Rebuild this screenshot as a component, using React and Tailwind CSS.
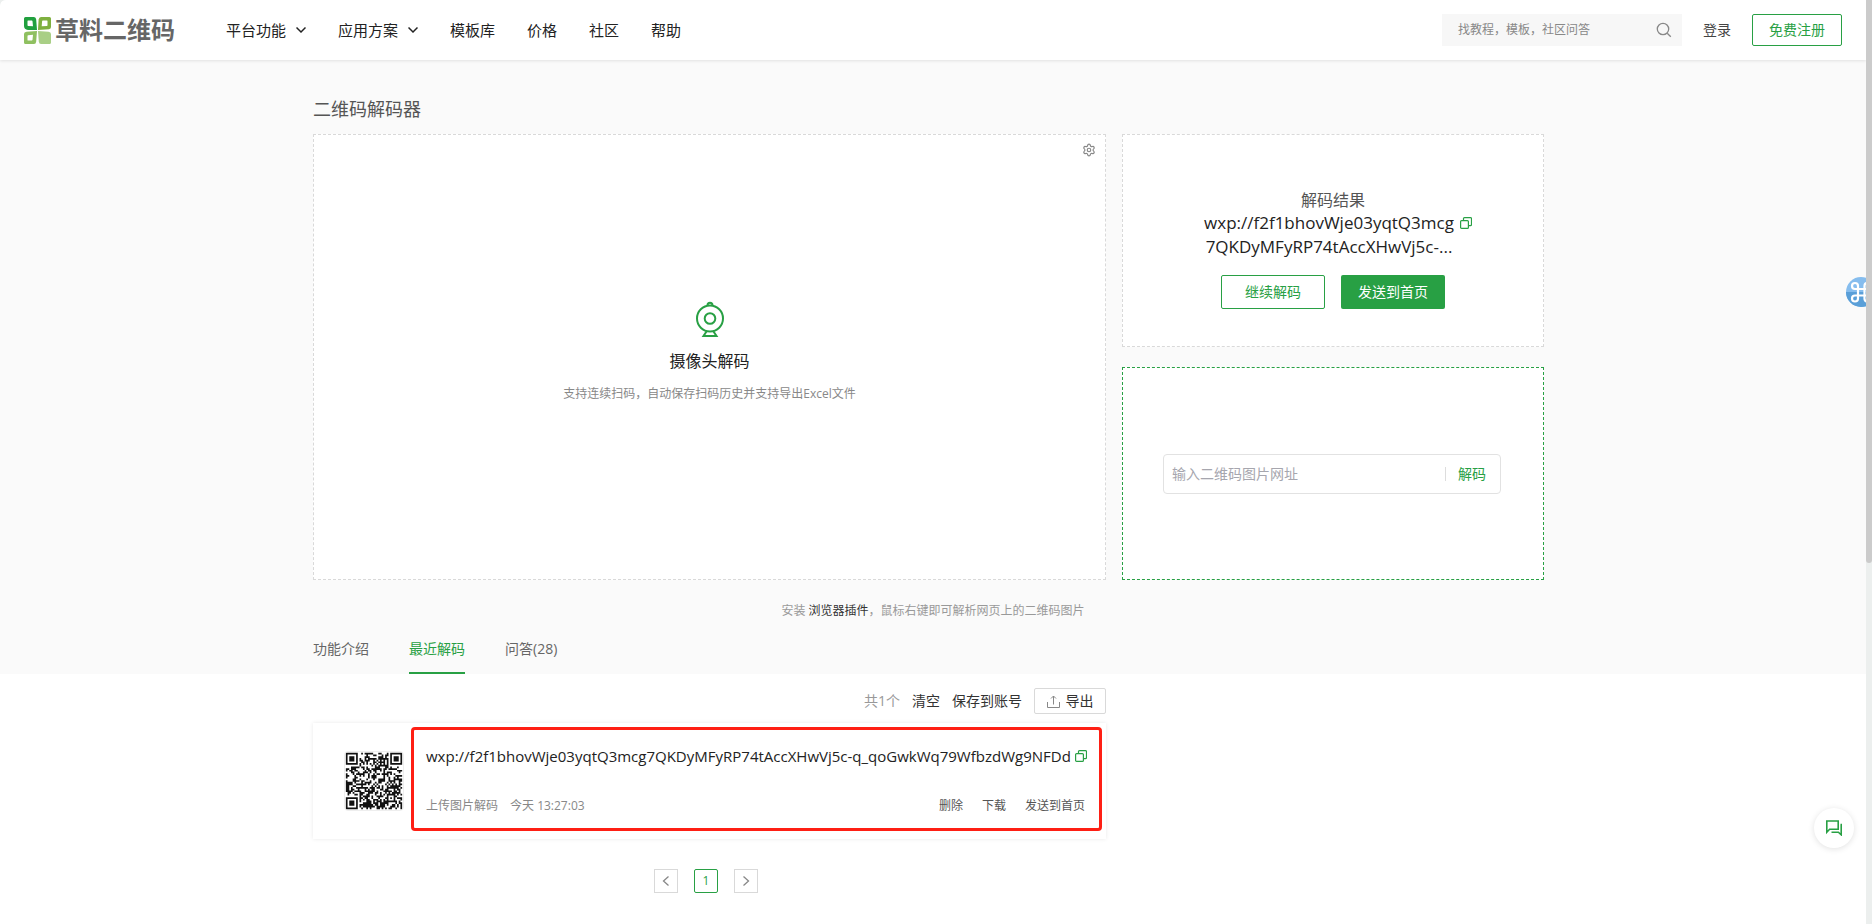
import React from "react";
import { Settings } from "lucide-react";

const QR_SIZE = 33;

function inFinder(x, y) {
  const corners = [[0, 0], [QR_SIZE - 7, 0], [0, QR_SIZE - 7]];
  for (const [cx, cy] of corners) {
    const dx = x - cx;
    const dy = y - cy;
    if (dx >= -1 && dx <= 7 && dy >= -1 && dy <= 7) {
      const ring = Math.max(Math.abs(dx - 3), Math.abs(dy - 3));
      return ring === 3 || ring <= 1 ? 1 : 0;
    }
  }
  return null;
}

function qrPath() {
  let seed = 20231;
  let d = "";
  for (let y = 0; y < QR_SIZE; y++) {
    for (let x = 0; x < QR_SIZE; x++) {
      seed = (seed * 1103515245 + 12345) % 2147483648;
      let on = (seed >> 14) % 100 < 54 ? 1 : 0;
      const finder = inFinder(x, y);
      const align = Math.max(Math.abs(x - 26), Math.abs(y - 26));
      if (finder !== null) on = finder;
      else if (align <= 2) on = align !== 1 ? 1 : 0;
      else if (y === 6) on = (x + 1) % 2;
      else if (x === 6) on = (y + 1) % 2;
      if (on) d += `M${x} ${y}h1v1h-1z`;
    }
  }
  return d;
}

const QR_PATH = qrPath();

function Logo() {
  return (
    <a href="#" className="flex items-center gap-1 text-[#666666]">
      <svg className="size-[27px]" viewBox="0 0 27 27" fillRule="evenodd" aria-hidden="true">
        <path fill="#21a03f" d="M1.500 0H10q2 0 2.200 2.500L13 13H4Q0 12.500 0 9V1.500Q0 0 1.500 0zM3.500 4v4.200q0 .6.800.700L9 9.300 8.500 4.200Q8.400 3.500 7.800 3.500H4q-.5 0-.5.500z" />
        <path fill="#7fb03f" d="M17 0h8.500Q27 0 27 1.500V10q0 2-2 2.200L14 13l.6-10.500Q15 0 17 0zM18.800 3.500q-.6 0-.7.700L17.700 9.300l5.200-.4q.6-.1.600-.700V4q0-.5-.5-.5z" />
        <path fill="#8fc060" d="M2.500 14.800 13 14l-.8 10.500Q12 27 10 27H1.500Q0 27 0 25.500V17q0-2 2.500-2.200zM4.200 18.200q-.7.100-.7.700V23q0 .5.500.5h3.800q.6 0 .7-.7l.5-5z" />
        <path fill="#a9cf86" d="M14 14l10.500.8Q27 15 27 17v8.500q0 1.500-1.500 1.500H17q-2 0-2.200-2.500z" />
      </svg>
      <span className="text-2xl font-bold leading-7">草料二维码</span>
    </a>
  );
}

function Chevron() {
  return (
    <svg className="h-3 w-2.5" viewBox="0 0 10 12" fill="none" stroke="currentColor" strokeWidth="1.500" aria-hidden="true">
      <path d="M.5 3.500 5 8l4.500-4.500" />
    </svg>
  );
}

function CopyIcon() {
  return (
    <svg className="size-3" viewBox="0 0 12 12" fill="none" stroke="#28a044" strokeWidth="1.200" aria-hidden="true">
      <rect x=".6" y="3.600" width="7.800" height="7.800" rx="1" />
      <path d="M3.500 3.400V1.600q0-1 1-1h6q1 0 1 1v6q0 1-1 1H8.600" />
    </svg>
  );
}

function CopyButton() {
  return (
    <button type="button" aria-label="复制" className="flex">
      <CopyIcon />
    </button>
  );
}

const NAV = [
  { label: "平台功能", menu: true },
  { label: "应用方案", menu: true },
  { label: "模板库" },
  { label: "价格" },
  { label: "社区" },
  { label: "帮助" },
];

function Header() {
  return (
    <header className="relative flex h-[60px] items-center bg-white px-6 shadow-[0_1px_3px_rgba(0,0,0,0.1)]">
      <Logo />
      <nav className="ml-[51px] flex items-center gap-8 text-[15px] leading-6 text-[#222222]">
        {NAV.map((item) => (
          <a key={item.label} href="#" className="flex items-center gap-2.5">
            {item.label}
            {item.menu && <Chevron />}
          </a>
        ))}
      </nav>
      <div className="ml-auto flex items-center">
        <label className="flex h-8 w-60 items-center bg-[#f7f7f7] pl-4 pr-[10px]">
          <input
            type="text"
            aria-label="搜索"
            placeholder="找教程，模板，社区问答"
            className="min-w-0 flex-1 bg-transparent text-xs outline-none placeholder:text-[#888888]"
          />
          <svg className="size-4" viewBox="0 0 16 16" fill="none" stroke="#888888" strokeWidth="1.300" aria-hidden="true">
            <circle cx="7" cy="7" r="5.700" />
            <path d="m11.200 11.200 3.600 3.600" />
          </svg>
        </label>
        <a href="#" className="ml-[21px] text-sm text-[#444444]">登录</a>
        <button type="button" className="ml-[21px] h-8 w-[90px] rounded-xs border border-[#28a044] text-sm text-[#28a044]">
          免费注册
        </button>
      </div>
    </header>
  );
}

function CameraPanel() {
  return (
    <section className="relative flex w-[793px] flex-col items-center justify-center border border-dashed border-[#d9d9d9] bg-white pb-[10px]">
      <button type="button" aria-label="设置" className="absolute right-[9px] top-2">
        <Settings className="size-3.5 text-[#888888]" strokeWidth={2} aria-hidden="true" />
      </button>
      <svg className="h-9 w-[30px]" viewBox="0 0 30 36" fill="none" stroke="#28a044" strokeWidth="2" aria-hidden="true">
        <circle cx="15" cy="17.500" r="13" />
        <circle cx="15" cy="17.500" r="5.300" />
        <path d="M12.500 4.500c0-3.700 5-3.700 5 0" />
        <path d="M11.500 30.500 8.500 35h13l-3-4.500" />
      </svg>
      <h2 className="mt-3 text-base leading-6 text-[#222222]">摄像头解码</h2>
      <p className="mt-[11px] text-xs leading-5 text-[#888888]">支持连续扫码，自动保存扫码历史并支持导出Excel文件</p>
    </section>
  );
}

function ResultPanel() {
  return (
    <section className="flex flex-col items-center border border-dashed border-[#d9d9d9] bg-white pt-[54px]">
      <h2 className="text-base leading-[22px] text-[#555555]">解码结果</h2>
      <div className="pr-2">
        <div className="relative text-[17px] leading-6 text-[#222222]">
          <p className="text-center">
            <span className="block">wxp://f2f1bhovWje03yqtQ3mcg</span>
            <span className="block">7QKDyMFyRP74tAccXHwVj5c-...</span>
          </p>
          <span className="absolute left-full top-1.5 ml-1.5">
            <CopyButton />
          </span>
        </div>
      </div>
      <div className="mt-4 flex gap-4 text-sm">
        <button type="button" className="h-[34px] w-[104px] rounded-xs border border-[#28a044] text-[#28a044]">
          继续解码
        </button>
        <button type="button" className="h-[34px] w-[104px] rounded-xs bg-[#28a044] text-white">
          发送到首页
        </button>
      </div>
    </section>
  );
}

function UrlPanel() {
  return (
    <section className="flex items-center justify-center border border-dashed border-[#28a044] bg-white pl-10 pr-[42px]">
      <div className="flex h-10 w-[338px] items-center rounded border border-[#e2e2e2] pl-2 pr-[14px] text-sm">
        <input
          type="text"
          aria-label="二维码图片网址"
          placeholder="输入二维码图片网址"
          className="min-w-0 flex-1 outline-none placeholder:text-[#a6a6ae]"
        />
        <button type="button" className="border-l border-[#dddddd] pl-3 leading-[14px] text-[#28a044]">
          解码
        </button>
      </div>
    </section>
  );
}

function Tabs() {
  return (
    <nav className="mt-[3px] flex gap-10 text-sm text-[#666666]">
      <a href="#" className="h-[50px] pt-[15px] leading-5">功能介绍</a>
      <a href="#" className="h-[50px] border-b-2 border-[#28a044] pt-[15px] leading-5 text-[#28a044]">最近解码</a>
      <a href="#" className="h-[50px] pt-[15px] leading-5">问答(28)</a>
    </nav>
  );
}

function Toolbar() {
  return (
    <div className="flex items-center justify-end gap-3 text-sm leading-5 text-[#333333]">
      <span className="text-[#999999]">共1个</span>
      <button type="button">清空</button>
      <button type="button">保存到账号</button>
      <button type="button" className="flex h-[26px] w-[72px] items-center justify-center gap-1.5 rounded-xs border border-[#d9d9d9] bg-white">
        <svg className="size-[13px]" viewBox="0 0 13 13" fill="none" stroke="#888888" aria-hidden="true">
          <path d="M.5 7v5.500h12V7M6.500 9.500V1M4 3.500 6.500 1 9 3.500" />
        </svg>
        导出
      </button>
    </div>
  );
}

function RecordCard() {
  return (
    <article className="relative mt-[9px] flex h-[116px] items-center bg-white pl-[31px] pr-[21px] shadow-[0_0_4px_rgba(0,0,0,0.09)]">
      <svg className="size-[60px] shrink-0 rounded border border-[#eeeeee]" viewBox="-0.5 -0.5 34 34" role="img" aria-label="二维码">
        <path d={QR_PATH} fill="#111111" />
      </svg>
      <div className="ml-[22px] min-w-0 flex-1 pb-0.5">
        <div className="flex items-center gap-1 whitespace-nowrap text-[15px] leading-6 text-[#222222]">
          wxp://f2f1bhovWje03yqtQ3mcg7QKDyMFyRP74tAccXHwVj5c-q_qoGwkWq79WfbzdWg9NFDd
          <CopyButton />
        </div>
        <div className="mt-7 flex items-center text-xs leading-5 text-[#888888]">
          <span>上传图片解码</span>
          <time className="ml-3">今天 13:27:03</time>
          <div className="ml-auto flex gap-[19px] text-[#555555]">
            <button type="button">删除</button>
            <button type="button">下载</button>
            <button type="button">发送到首页</button>
          </div>
        </div>
      </div>
      <div className="pointer-events-none absolute bottom-2 left-[98px] right-1 top-1 rounded border-[3px] border-[#fe1f14]" />
    </article>
  );
}

function Pagination() {
  const box = "flex size-6 items-center justify-center border bg-white text-xs";
  return (
    <nav aria-label="分页" className="mt-[30px] flex justify-center gap-4 pr-[7px]">
      <button type="button" aria-label="上一页" className={`${box} border-[#d9d9d9]`}>
        <svg className="size-3" viewBox="0 0 12 12" fill="none" stroke="#888888" strokeWidth="1.300" aria-hidden="true">
          <path d="M8.500 1.500 3.500 6l5 4.500" />
        </svg>
      </button>
      <button type="button" className={`${box} rounded-xs border-[#28a044] text-[#28a044]`}>1</button>
      <button type="button" aria-label="下一页" className={`${box} border-[#d9d9d9]`}>
        <svg className="size-3" viewBox="0 0 12 12" fill="none" stroke="#888888" strokeWidth="1.300" aria-hidden="true">
          <path d="m3.500 1.500 5 4.500-5 4.500" />
        </svg>
      </button>
    </nav>
  );
}

function FloatingButtons() {
  return (
    <>
      <div className="absolute right-0 top-[277px] h-[30px] w-5 overflow-hidden">
        <button type="button" aria-label="快捷工具" className="block">
          <svg className="size-[30px] max-w-none" viewBox="0 0 30 30" aria-hidden="true">
            <circle cx="15" cy="15" r="15" fill="#86bdee" />
            <path d="M0 15a15 15 0 0 0 30 0z" fill="#5a9fd8" />
            <path d="M12 12h6.500v6.500H12zM12 12H9a3 3 0 1 1 3-3zM18.500 12V9a3 3 0 1 1 3 3zM18.500 18.500h3a3 3 0 1 1-3 3zM12 18.500v3a3 3 0 1 1-3-3z" fill="none" stroke="#ffffff" strokeWidth="2.200" />
          </svg>
        </button>
      </div>
      <button
        type="button"
        aria-label="在线咨询"
        className="absolute right-3 top-[808px] flex size-10 items-center justify-center rounded-full bg-white shadow-[0_1px_6px_rgba(0,0,0,0.12)]"
      >
        <svg className="size-4" viewBox="0 0 16 16" fill="none" stroke="#28a044" strokeWidth="1.600" aria-hidden="true">
          <path d="M.8 12.200V1h11.400v8.200H3.600z" />
          <path d="M14.500 4.500h.7v10.300l-2.800-2.600H5.500" />
        </svg>
      </button>
    </>
  );
}

export default function App() {
  return (
    <div className="flex min-h-screen bg-[#ecefee] font-['Open_Sans','Noto_Sans_CJK_SC',sans-serif]">
      <div className="relative min-w-0 flex-1 overflow-hidden rounded-tl-md bg-white">
        <Header />
        <main>
          <div className="bg-[#fafafa] pt-9">
            <div className="mx-auto max-w-[1240px]">
              <h1 className="text-lg leading-[26px] text-[#555555]">二维码解码器</h1>
              <div className="mt-3 flex h-[446px] gap-4">
                <CameraPanel />
                <div className="mr-[9px] grid flex-1 grid-rows-2 gap-5">
                  <ResultPanel />
                  <UrlPanel />
                </div>
              </div>
              <p className="mt-[21px] text-center text-xs leading-5 text-[#999999]">
                安装 <a href="#" className="text-[#333333]">浏览器插件</a>，鼠标右键即可解析网页上的二维码图片
              </p>
              <Tabs />
            </div>
          </div>
          <div className="mx-auto max-w-[1240px] pt-[14px]">
            <div className="w-[793px]">
              <Toolbar />
              <RecordCard />
              <Pagination />
            </div>
          </div>
        </main>
        <FloatingButtons />
      </div>
      <div className="w-1.5 shrink-0">
        <div className="h-[563px] rounded-b-sm bg-[#cbcbcb]" />
      </div>
    </div>
  );
}
